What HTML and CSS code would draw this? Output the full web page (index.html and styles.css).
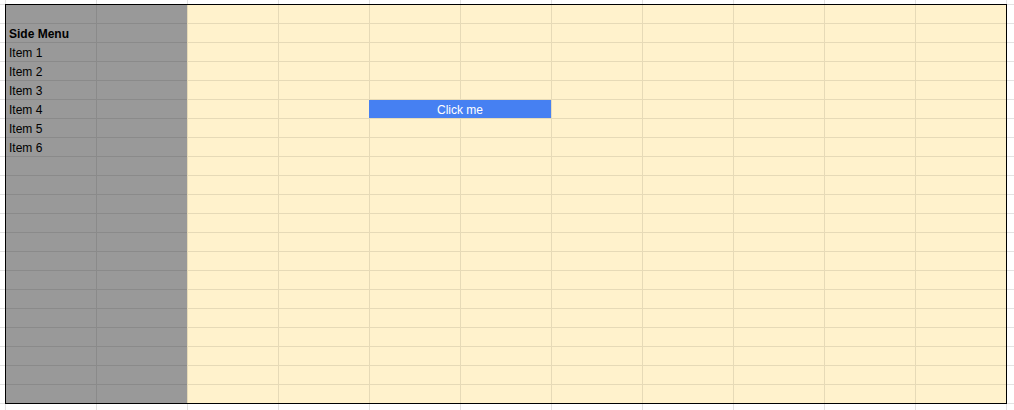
FILE: index.html
```html
<!DOCTYPE html>
<html lang="en">
<head>
<meta charset="utf-8">
<title>Sheet UI</title>
<link rel="stylesheet" href="styles.css">
</head>
<body>
  <div class="sheet">
    <nav class="side">
      <div class="cell"></div>
      <div class="cell title">Side Menu</div>
      <div class="cell">Item 1</div>
      <div class="cell">Item 2</div>
      <div class="cell">Item 3</div>
      <div class="cell">Item 4</div>
      <div class="cell">Item 5</div>
      <div class="cell">Item 6</div>
    </nav>
    <main class="main">
      <button class="btn" type="button">Click me</button>
    </main>
  </div>
</body>
</html>
```

FILE: styles.css
```css
html, body {
  margin: 0;
  padding: 0;
}

body {
  width: 1014px;
  height: 410px;
  overflow: hidden;
  background-color: #ffffff;
  background-image:
    linear-gradient(to right, #e2e2e2 1px, transparent 1px),
    linear-gradient(to bottom, #e2e2e2 1px, transparent 1px);
  background-size: 91px 19px;
  background-position: 5px 4px;
  font-family: "Liberation Sans", Arial, sans-serif;
  font-size: 12px;
  color: #000;
}

.sheet {
  margin: 4px 0 0 5px;
  width: 1002px;
  height: 400px;
  box-sizing: border-box;
  padding: 1px 0 0 1px;
  display: flex;
  outline: 1px solid #000;
  outline-offset: -1px;
}

.side {
  width: 181px;
  flex: none;
  background-color: #999999;
  background-image:
    repeating-linear-gradient(to right, transparent 0 90px, #8a8a8a 90px 91px),
    repeating-linear-gradient(to bottom, transparent 0 18px, #8a8a8a 18px 19px);
  display: grid;
  grid-template-rows: repeat(21, 19px);
  align-content: start;
}

.cell {
  height: 17px;
  padding-top: 1px;
  line-height: 18px;
  padding-left: 3px;
  white-space: nowrap;
}

.title {
  font-weight: bold;
}

.main {
  flex: 1;
  background-color: #fff2cc;
  background-image:
    repeating-linear-gradient(to right, #e6dab7 0 1px, transparent 1px 91px),
    repeating-linear-gradient(to bottom, transparent 0 18px, #e6dab7 18px 19px);
  display: grid;
  grid-template-columns: 1px repeat(9, 91px);
  grid-template-rows: repeat(21, 19px);
  align-content: start;
}

.btn {
  grid-column: 4 / span 2;
  grid-row: 6;
  margin-left: -1px;
  width: 182px;
  height: 18px;
  box-sizing: border-box;
  border: none;
  padding: 2px 0 0 0;
  background: #4680f2;
  color: #ffffff;
  font-family: "Liberation Sans", Arial, sans-serif;
  font-size: 12px;
  line-height: 16px;
  text-align: center;
  cursor: pointer;
}
```
